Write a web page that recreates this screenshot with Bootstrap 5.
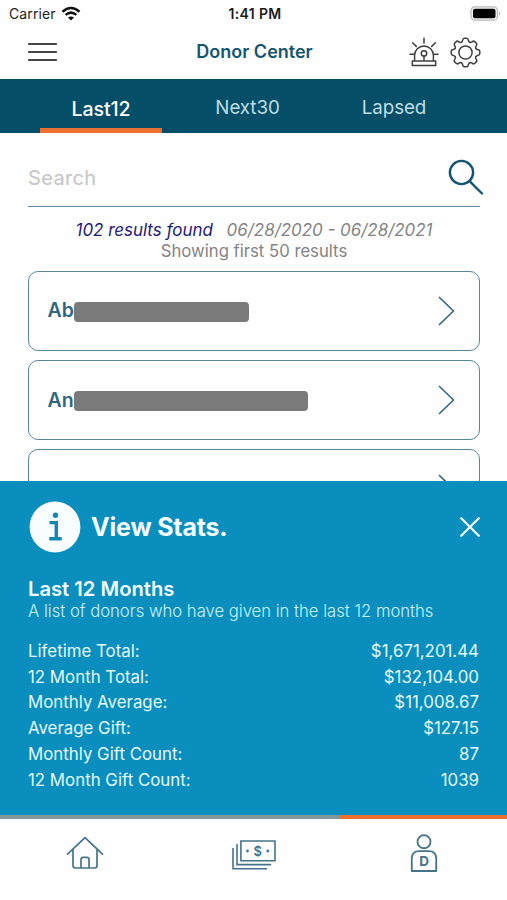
<!DOCTYPE html>
<html lang="en">
<head>
<meta charset="utf-8">
<meta name="viewport" content="width=device-width, initial-scale=1">
<title>Donor Center</title>
<link href="https://cdn.jsdelivr.net/npm/bootstrap@5.3.0/dist/css/bootstrap.min.css" rel="stylesheet">
<style>
  body { font-family: Inter, "Liberation Sans", sans-serif; background: #fefefe; color: #222; }
  svg { display: block; flex: none; fill: none; stroke-linecap: round; stroke-linejoin: round; }
  .app { height: 900px; }
  .statusbar { height: 27px; padding: 0 6px 0 9px; }
  .statusbar > div { flex: 1 1 0; }
  .carrier { font-size: 14px; letter-spacing: .1px; }
  .clock { font-weight: 600; letter-spacing: .35px; font-size: 14px; color: #1b1b1b; white-space: nowrap; }
  .titlebar { height: 52px; padding: 0 26px 2px 28px; }
  .titlebar > div { flex: 1 1 0; }
  .titlebar h1 { font-size: 18px; font-weight: 600; color: #15566f; letter-spacing: 0; }
  .tabs-strip { height: 53.5px; background: #044e67; padding: 0 40px; gap: 24.5px; }
  .tabs-strip .nav-link { width: 122px; padding: 4px 0 0; color: #bfdde6; font-size: 18.8px; font-weight: 400; letter-spacing: -.1px; flex: none; }
  .tabs-strip .nav-link.active { color: #fff; font-weight: 500; font-size: 19.6px; padding: 13px 0 0; border-bottom: 5px solid #ec7032; }
  .page-pad { padding-left: 28px; padding-right: 27px; }
  .search-row { height: 74.5px; padding-top: 15px; border-bottom: 1.5px solid #5f8fa3; }
  .search-row input { font-size: 20px; letter-spacing: .35px; color: #555; margin-top: 2px; }
  .search-row input::placeholder { color: #c5c5c5; opacity: 1; }
  .found { padding: 13px 0 9px; margin: 0 -4px; font-size: 16.7px; line-height: 21px; color: #848484; }
  .found .fst-italic { font-size: 16.95px; white-space: nowrap; }
  .found em { color: #241a76; margin-right: 9px; }
  .donor-list { flex: 1 1 0; min-height: 0; overflow: hidden; gap: 9px; }
  .donor { height: 80.2px; flex: none; border: 1.5px solid #58879c; border-radius: 10px; padding: 0 24px 0 18.5px; background: #fefefe; }
  .donor b { font-size: 19.5px; font-weight: 600; color: #31667f; }
  .mask { height: 20px; border-radius: 4px; background: #7a7a7a; margin-top: 2px; }
  .stats { height: 334px; background: #098ebd; color: #e3f8ff; padding-top: 20px; }
  .stats h2 { font-size: 25px; font-weight: 700; color: #f4fdff; letter-spacing: -.2px; margin-left: 9px; }
  .stats h3 { font-size: 20.2px; line-height: 24px; font-weight: 600; margin-top: 24px; color: #f0fcff; }
  .stats p { font-size: 16.65px; line-height: 21px; font-weight: 300; color: #c9f2ff; }
  .stat-rows { margin-top: 17.5px; margin-right: 1px; font-size: 16.85px; line-height: 25.7px; }
  .navline { height: 4.5px; background: #7f979e; }
  .navline div { width: 168px; background: #ec7032; }
  .bottomnav { height: 81px; }
  .bottomnav > a { flex: 1 1 0; height: 68px; }
</style>
</head>
<body>
<div class="app d-flex flex-column overflow-hidden">
  <div class="statusbar d-flex align-items-center">
    <div class="d-flex align-items-center"><span class="carrier">Carrier</span>
      <svg class="ms-1" width="22" height="16" viewBox="0 0 22 16" stroke="#111" stroke-width="2.5" style="stroke-linecap:butt"><path d="M2.5 5.7Q11 -1.6 19.5 5.7M5.6 8.9Q11 4.4 16.4 8.9"/><path d="M8 11.6Q11 9.2 14 11.6L11 14.6Z" fill="#111" stroke="none"/></svg>
    </div>
    <div class="clock text-center">1:41 PM</div>
    <div class="d-flex justify-content-end">
      <svg width="31" height="15" viewBox="0 0 31 15"><rect x="1" y=".8" width="26.5" height="13.4" rx="4" fill="#f5f5f5" stroke="#b9b9b9" stroke-width="1.3"/><rect x="3" y="2.8" width="22.5" height="9.4" rx="2" fill="#000"/><path d="M29 5.2Q31.6 7.5 29 9.8Z" fill="#bbb"/></svg>
    </div>
  </div>

  <header class="titlebar d-flex align-items-center">
    <div><svg width="29" height="20" viewBox="0 0 29 20" stroke="#484446" stroke-width="2.1"><path d="M1 2H28M1 10H28M1 18H28"/></svg></div>
    <h1 class="m-0">Donor Center</h1>
    <div class="d-flex justify-content-end align-items-center">
      <svg width="30" height="30" viewBox="0 0 30 30" stroke="#3f3f41" stroke-width="1.5"><path d="M15 1.3V6M3.6 5.8L7.3 9.4M26.4 5.8L22.7 9.4M1 17.3H4.4M25.6 17.3H29M5.6 24V18.4A9.4 9.4 0 0 1 24.4 18.4V24M15 18.6V24M3.3 24H26.7V28.6H3.3Z"/><circle cx="15" cy="16.4" r="2.7"/></svg>
      <svg style="margin-left:11px" width="31" height="31" viewBox="-15.5 -15.5 31 31" stroke="#3f3f41" stroke-width="1.5"><defs><path id="tooth" d="M-4.2-10.2Q-3.2-10.6-2.9-12.2Q-2.6-14.3-1-14.3H1Q2.6-14.3 2.9-12.2Q3.2-10.6 4.2-10.2"/></defs><use href="#tooth"/><use href="#tooth" transform="rotate(45)"/><use href="#tooth" transform="rotate(90)"/><use href="#tooth" transform="rotate(135)"/><use href="#tooth" transform="rotate(180)"/><use href="#tooth" transform="rotate(225)"/><use href="#tooth" transform="rotate(270)"/><use href="#tooth" transform="rotate(315)"/><circle r="6.6"/></svg>
    </div>
  </header>

  <nav class="tabs-strip nav flex-nowrap">
    <a class="nav-link active d-flex align-items-center justify-content-center" href="#">Last12</a>
    <a class="nav-link d-flex align-items-center justify-content-center" href="#">Next30</a>
    <a class="nav-link d-flex align-items-center justify-content-center" href="#">Lapsed</a>
  </nav>

  <main class="page-pad d-flex flex-column flex-grow-1 overflow-hidden">
    <div class="search-row d-flex align-items-center">
      <input class="border-0 bg-transparent p-0 flex-grow-1" type="text" placeholder="Search" aria-label="Search">
      <svg width="36" height="36" viewBox="0 0 36 36" stroke="#155570" stroke-width="2.4" style="margin-right:-4px"><circle cx="13.5" cy="13.5" r="11.6"/><path d="M21.8 22.4L34 34.5"/></svg>
    </div>
    <div class="found text-center">
      <div class="fst-italic"><em>102 results found</em> <span>06/28/2020 - 06/28/2021</span></div>
      <div class="shown">Showing first 50 results</div>
    </div>
    <div class="donor-list d-flex flex-column">
      <div class="donor d-flex align-items-center"><b>Ab</b><span class="mask" style="width:175px"></span>
        <svg class="ms-auto" width="17" height="30" viewBox="0 0 17 30" stroke="#386982" stroke-width="1.7"><path d="M1.5 1.5L15.5 15L1.5 28.5"/></svg></div>
      <div class="donor d-flex align-items-center"><b>An</b><span class="mask" style="width:234px"></span>
        <svg class="ms-auto" width="17" height="30" viewBox="0 0 17 30" stroke="#386982" stroke-width="1.7"><path d="M1.5 1.5L15.5 15L1.5 28.5"/></svg></div>
      <div class="donor d-flex align-items-center">
        <svg class="ms-auto" width="17" height="30" viewBox="0 0 17 30" stroke="#386982" stroke-width="1.7"><path d="M1.5 1.5L15.5 15L1.5 28.5"/></svg></div>
    </div>
  </main>

  <section class="stats page-pad">
    <div class="d-flex align-items-center">
      <svg width="54" height="52" viewBox="0 0 54 52"><circle cx="27" cy="26" r="25.4" fill="#f8feff"/><circle cx="27.5" cy="14.2" r="2.7" fill="#1587ae"/><path d="M21.5 21.6H28.3V37.7M21.3 37.7H33.7" stroke="#1587ae" stroke-width="3.4" style="stroke-linecap:butt;stroke-linejoin:miter"/></svg>
      <h2 class="mb-0">View Stats.</h2>
      <svg class="ms-auto" width="20" height="20" viewBox="0 0 20 20" stroke="#f4fdff" stroke-width="2.2"><path d="M1.2 1.2L18.8 18.8M18.8 1.2L1.2 18.8"/></svg>
    </div>
    <h3 class="mb-0">Last 12 Months</h3>
    <p class="mb-0">A list of donors who have given in the last 12 months</p>
    <div class="stat-rows">
      <div class="d-flex justify-content-between"><span>Lifetime Total:</span><span>$1,671,201.44</span></div>
      <div class="d-flex justify-content-between"><span>12 Month Total:</span><span>$132,104.00</span></div>
      <div class="d-flex justify-content-between"><span>Monthly Average:</span><span>$11,008.67</span></div>
      <div class="d-flex justify-content-between"><span>Average Gift:</span><span>$127.15</span></div>
      <div class="d-flex justify-content-between"><span>Monthly Gift Count:</span><span>87</span></div>
      <div class="d-flex justify-content-between"><span>12 Month Gift Count:</span><span>1039</span></div>
    </div>
  </section>

  <div class="navline d-flex justify-content-end"><div></div></div>
  <nav class="bottomnav d-flex">
    <a href="#" class="d-flex align-items-center justify-content-center" aria-label="Home"><svg width="38" height="34" viewBox="0 0 38 34" stroke="#457389" stroke-width="1.7"><path d="M1.5 18.2L19 1.6L36.5 18.2M7 13.5V29.6Q7 32 9.4 32H28.6Q31 32 31 29.6V13.5M15 32V23.5Q15 21.3 17.2 21.3H20.8Q23 21.3 23 23.5V32"/></svg></a>
    <a href="#" class="d-flex align-items-center justify-content-center" aria-label="Donations"><svg width="44" height="30" viewBox="0 0 44 30" stroke="#457389" stroke-width="1.6" style="stroke-linejoin:miter;margin-top:4px"><path d="M8.9 1H43V20.8H8.9ZM5 4.5V24.6H38.5M1 8.5V28.7H34.5"/><circle cx="15.5" cy="11" r="1.4" fill="#457389" stroke="none"/><circle cx="35.8" cy="11" r="1.4" fill="#457389" stroke="none"/><text x="25.8" y="15.6" text-anchor="middle" font-size="13" font-weight="600" fill="#457389" stroke="none">$</text></svg></a>
    <a href="#" class="d-flex align-items-center justify-content-center" aria-label="Donors"><svg width="28" height="39" viewBox="0 0 28 39" stroke="#457389" stroke-width="1.8" style="margin-left:2px"><circle cx="14" cy="7.7" r="6.5"/><path d="M1.8 37V24Q2.4 17.2 9 17.2H19Q25.6 17.2 26.2 24V37Z"/><text x="14.2" y="31.8" text-anchor="middle" font-size="13.5" font-weight="700" fill="#457389" stroke="none">D</text></svg></a>
  </nav>
</div>
<script src="https://cdn.jsdelivr.net/npm/bootstrap@5.3.0/dist/js/bootstrap.bundle.min.js"></script>
</body>
</html>
